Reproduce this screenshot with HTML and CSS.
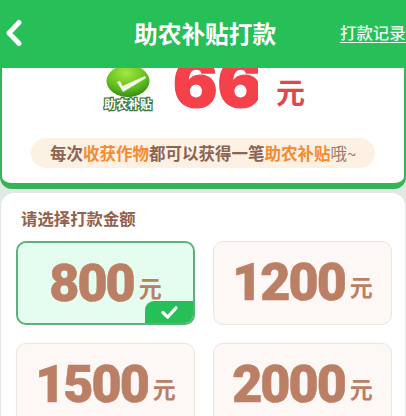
FILE: index.html
```html
<!DOCTYPE html>
<html lang="zh">
<head>
<meta charset="utf-8">
<title>助农补贴打款</title>
<link rel="stylesheet" href="styles.css">
</head>
<body>
<div class="page">
  <header class="topbar">
    <svg class="back" viewBox="0 0 18 28" width="18" height="28"><path d="M14 3.5 L4 14 L14 24.5" fill="none" stroke="#fff" stroke-width="5" stroke-linecap="round" stroke-linejoin="round"/></svg>
    <h1 class="title">助农补贴打款</h1>
    <a class="records">打款记录</a>
  </header>
  <section class="hero">
    <div class="amount-row">
      <div class="badge">
        <svg class="badge-icon" viewBox="0 0 44 30" width="44" height="30">
          <defs>
            <radialGradient id="g" cx="45%" cy="25%" r="80%"><stop offset="0" stop-color="#a6e640"/><stop offset="0.6" stop-color="#62bf1f"/><stop offset="1" stop-color="#2c8412"/></radialGradient>
          </defs>
          <ellipse cx="22" cy="13" rx="21.5" ry="16" fill="url(#g)"/>
          <path d="M11 14 L14 13 L16.5 18 L39 8 L40 10 L17 24 Z" fill="#f6fbe8"/>
        </svg>
        <span class="badge-text">助农补贴</span>
      </div>
      <div class="big-wrap"><span class="big">66</span></div>
      <span class="unit">元</span>
    </div>
    <p class="tip">每次<em>收获作物</em>都可以获得一笔<em>助农补贴</em><span class="light">哦~</span></p>
  </section>
  <section class="panel">
    <h2 class="label">请选择打款金额</h2>
    <div class="grid">
      <div class="opt on"><b>800</b><i>元</i>
        <span class="tick"><svg viewBox="0 0 20 16" width="19" height="15"><path d="M3 8 L8 13 L17 3" fill="none" stroke="#fff" stroke-width="3.4" stroke-linecap="round" stroke-linejoin="round"/></svg></span>
      </div>
      <div class="opt"><b>1200</b><i>元</i></div>
      <div class="opt"><b>1500</b><i>元</i></div>
      <div class="opt"><b>2000</b><i>元</i></div>
    </div>
  </section>
</div>
</body>
</html>
```
FILE: styles.css
```css
* { box-sizing: border-box; }
html, body { margin: 0; padding: 0; }
body { width: 406px; height: 416px; overflow: hidden; background: #dfeae3; font-family: "Noto Sans CJK SC", "Liberation Sans", sans-serif; }
.page { width: 406px; height: 416px; overflow: hidden; display: flex; flex-direction: column; }
.topbar { height: 68px; flex: none; background: #27bf57; display: flex; align-items: center; padding: 0 0 3px 5px; }
.back { flex: none; }
.title { margin: 0 0 0 111px; color: #fff; font-size: 23.7px; font-weight: 700; line-height: 30px; white-space: nowrap; width: 143px; flex: none; }
.records { margin-left: 63px; color: #fff; font-size: 16.4px; font-weight: 500; line-height: 20px; white-space: nowrap; border-bottom: 1.5px solid #fff; flex: none; opacity: .92; }
.hero { height: 121px; flex: none; background: #fff; border: solid #35b558; border-width: 0 2px 6px; border-radius: 0 0 12px 12px; display: flex; flex-direction: column; align-items: center; overflow: hidden; }
.amount-row { height: 52px; width: 100%; display: flex; align-items: flex-start; padding-left: 101px; }
.badge { width: 50px; flex: none; display: flex; flex-direction: column; align-items: center; }
.badge-icon { display: block; }
.badge-text { font-size: 12px; line-height: 13px; font-weight: 700; color: #fff; -webkit-text-stroke: 2.5px #3d7a3a; paint-order: stroke fill; white-space: nowrap; margin-top: -1px; }
.big-wrap { width: 86px; height: 44px; margin-left: 19px; overflow: hidden; flex: none; }
.big { display: block; font-family: "Inter", "Liberation Sans", sans-serif; font-size: 66px; font-weight: 900; line-height: 44px; color: #f4414a; margin-top: -7px; padding-left: 1px; -webkit-text-stroke: 1.2px #f4414a; }
.unit { margin: 6px 0 0 18px; font-size: 29px; line-height: 34px; font-weight: 700; color: #e0474c; }
.tip { margin: 18px 0 0; width: 344px; height: 30px; border-radius: 15px; background: #fdf1e3; color: #8d6353; font-size: 16.5px; font-weight: 700; line-height: 30px; text-align: center; white-space: nowrap; }
.tip em { font-style: normal; color: #f58a33; }
.tip .light { font-weight: 400; color: #9a7a6c; }
.panel { flex: 1; margin-top: 3px; background: #fff; border: 1px solid #e3e6e4; border-bottom: 0; border-radius: 14px 14px 0 0; padding: 13px 12px 0 15px; }
.label { margin: 0 0 11px 5px; font-size: 16.4px; line-height: 24px; font-weight: 700; color: #93604c; }
.grid { display: grid; grid-template-columns: 179px 179px; column-gap: 18px; row-gap: 18px; }
.opt { height: 84px; border: 1.5px solid #ece5e0; border-radius: 10px; background: #fdf8f5; display: flex; align-items: baseline; justify-content: center; position: relative; color: #bb7f66; padding-top: 10px; overflow: hidden; }
.opt b { font-family: "Roboto", "Liberation Sans", sans-serif; font-size: 52px; font-weight: 900; line-height: 62px; letter-spacing: -2px; -webkit-text-stroke: 0.6px #bb7f66; }
.opt i { font-style: normal; font-size: 23px; font-weight: 700; margin-left: 5px; transform: translateY(-4px); }
.opt.on { background: #e5fdef; border: 2px solid #5cb27b; }
.tick { position: absolute; right: -1px; bottom: -1px; width: 49px; height: 23px; background: #27bf57; border-radius: 9px 0 9px 0; display: flex; align-items: center; justify-content: center; }
.tick svg { display: block; }
```
